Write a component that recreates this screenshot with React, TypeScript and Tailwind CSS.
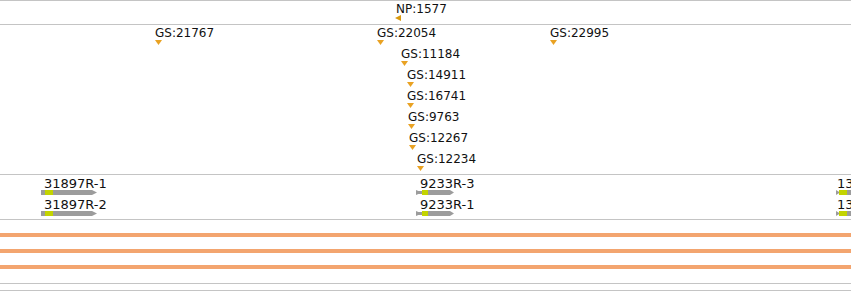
const gsFeatures = [
  { label: 'GS:21767', x: 155, row: 0 },
  { label: 'GS:22054', x: 377, row: 0 },
  { label: 'GS:22995', x: 550, row: 0 },
  { label: 'GS:11184', x: 401, row: 1 },
  { label: 'GS:14911', x: 407, row: 2 },
  { label: 'GS:16741', x: 407, row: 3 },
  { label: 'GS:9763', x: 408, row: 4 },
  { label: 'GS:12267', x: 409, row: 5 },
  { label: 'GS:12234', x: 417, row: 6 },
]

const genes = [
  { label: '31897R-1', x: 41, row: 0, kind: 'flat' },
  { label: '31897R-2', x: 41, row: 1, kind: 'flat' },
  { label: '9233R-3', x: 416, row: 0, kind: 'tail' },
  { label: '9233R-1', x: 416, row: 1, kind: 'tail' },
  { label: '13', x: 836, row: 0, kind: 'short' },
  { label: '13', x: 836, row: 1, kind: 'short' },
]

function Marker() {
  return (
    <svg width="7" height="5" viewBox="0 0 7 5" className="block">
      <polygon points="0,0 7,0 3.5,5" fill="#e9a223" />
    </svg>
  )
}

function GeneGlyph({ kind }: { kind: string }) {
  if (kind === 'flat') {
    return (
      <svg width="57" height="5" viewBox="0 0 57 5" className="block">
        <rect x="0" y="0" width="51" height="5" fill="#9c9c9c" />
        <polygon points="51,0 56,2.5 51,5" fill="#9c9c9c" />
        <rect x="4" y="0" width="8" height="5" fill="#c3d400" />
      </svg>
    )
  }
  if (kind === 'tail') {
    return (
      <svg width="39" height="5" viewBox="0 0 39 5" className="block">
        <polygon points="0,0 6,2.5 0,5" fill="#9c9c9c" />
        <rect x="2" y="1" width="5" height="3" fill="#9c9c9c" />
        <rect x="6" y="0" width="28" height="5" fill="#9c9c9c" />
        <polygon points="34,0 38,2.5 34,5" fill="#9c9c9c" />
        <rect x="6" y="0" width="6" height="5" fill="#c3d400" />
      </svg>
    )
  }
  return (
    <svg width="20" height="5" viewBox="0 0 20 5" className="block">
      <polygon points="0,0 4,2.5 0,5" fill="#9c9c9c" />
      <rect x="3" y="0" width="17" height="5" fill="#9c9c9c" />
      <rect x="3" y="0" width="8" height="5" fill="#c3d400" />
    </svg>
  )
}

export default function App() {
  return (
    <div className="w-[851px] h-[291px] overflow-hidden bg-white text-[12px] text-[#111] font-['DejaVu_Sans',sans-serif]">
      <div className="h-px bg-[#c4c4c4]" />

      {/* NP track */}
      <div className="relative h-[23px]">
        <div className="absolute left-[396px] top-[1px] leading-[14px]">NP:1577</div>
        <svg width="6" height="6" viewBox="0 0 6 6" className="absolute left-[395px] top-[14px]">
          <polygon points="6,0 6,6 0,3" fill="#d99a10" />
        </svg>
      </div>
      <div className="h-px bg-[#c4c4c4]" />

      {/* GS track */}
      <div className="relative h-[149px]">
        {gsFeatures.map((f) => (
          <div key={f.label} className="absolute" style={{ left: f.x, top: 1 + f.row * 21 }}>
            <div className="leading-[14px] whitespace-nowrap">{f.label}</div>
            <Marker />
          </div>
        ))}
      </div>
      <div className="h-px bg-[#c4c4c4]" />

      {/* gene track */}
      <div className="relative h-[44px]">
        {genes.map((g, i) => (
          <div key={i} className="absolute" style={{ left: g.x, top: 2 + g.row * 21 }}>
            <div
              className="h-[13px] text-[13px] leading-[13px] whitespace-nowrap"
              style={{ marginLeft: g.kind === 'flat' ? 3 : g.kind === 'tail' ? 4 : 1 }}
            >
              {g.label}
            </div>
            <GeneGlyph kind={g.kind} />
          </div>
        ))}
      </div>
      <div className="h-px bg-[#c4c4c4]" />

      {/* coverage track */}
      <div className="flex h-[63px] flex-col gap-[12px] pt-[13px]">
        <div className="h-[4px] bg-[#f3a56f]" />
        <div className="h-[4px] bg-[#f3a56f]" />
        <div className="h-[4px] bg-[#f3a56f]" />
      </div>
      <div className="h-px bg-[#c4c4c4]" />
      <div className="h-[6px]" />
      <div className="h-px bg-[#c4c4c4]" />
    </div>
  )
}
